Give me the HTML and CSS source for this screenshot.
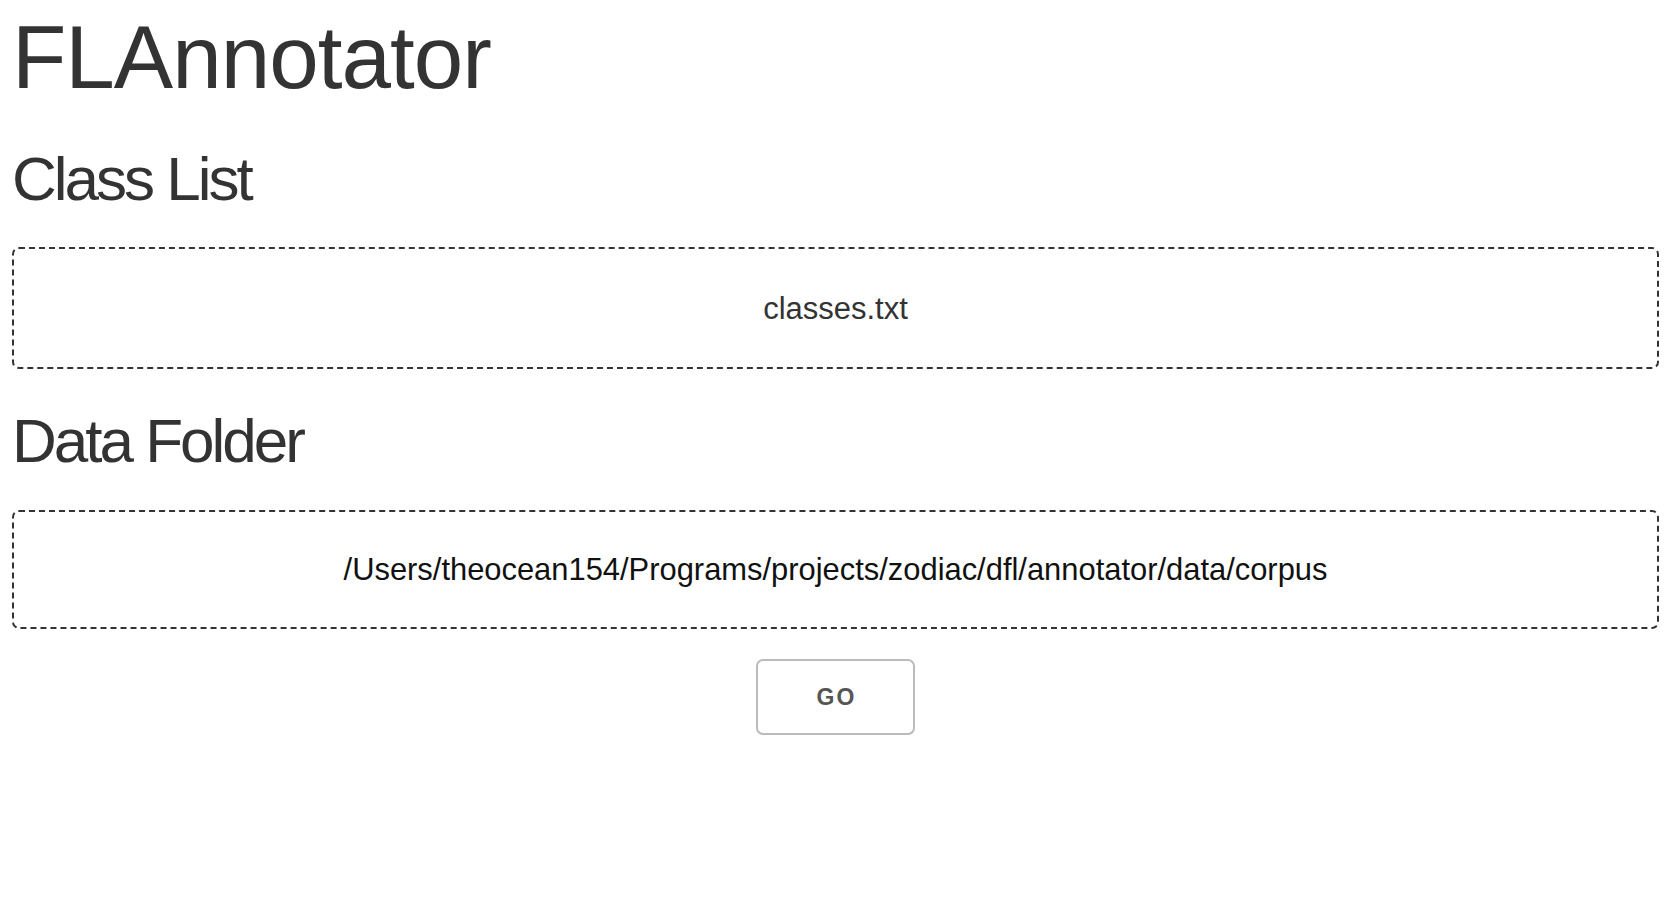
FILE: index.html
```html
<!DOCTYPE html>
<html>
<head>
<meta charset="utf-8">
<title>FLAnnotator</title>
<link rel="stylesheet" href="styles.css">
</head>
<body>
<div class="page">
  <h1 class="title">FLAnnotator</h1>
  <h3 class="section-title first">Class List</h3>
  <div class="drop-zone">
    <span class="drop-label">classes.txt</span>
  </div>
  <h3 class="section-title">Data Folder</h3>
  <div class="drop-zone compact">
    <span class="drop-label path">/Users/theocean154/Programs/projects/zodiac/dfl/annotator/data/corpus</span>
  </div>
  <div class="actions">
    <button class="btn">GO</button>
  </div>
</div>
</body>
</html>
```

FILE: styles.css
```css
html, body {
  margin: 0;
  padding: 0;
  background: #fff;
}

body {
  font-family: "Liberation Sans", Arial, sans-serif;
  color: #333;
}

.page {
  padding: 4px 15px 0 12px;
}

.title {
  margin: 0;
  font-size: 89px;
  font-weight: 400;
  line-height: 1.2;
  letter-spacing: -1px;
  color: #333;
}

.section-title {
  margin: 35px 0 0 0;
  font-size: 62px;
  font-weight: 400;
  line-height: 1.2;
  letter-spacing: -3px;
  color: #333;
}

.section-title.first {
  margin-top: 31px;
}

.drop-zone {
  margin-top: 31px;
  height: 118px;
  border: 2px dashed #333;
  border-radius: 7px;
  display: flex;
  align-items: center;
  justify-content: center;
}

.drop-zone.compact {
  height: 115px;
}

.drop-label {
  font-size: 31px;
  line-height: 1.2;
  color: #333;
}

.drop-label.path {
  color: #111;
  font-size: 30.9px;
}

.actions {
  display: flex;
  justify-content: center;
  margin-top: 30px;
  padding-right: 1px;
}

.btn {
  width: 159px;
  height: 76px;
  background: #fff;
  border: 2px solid #bbb;
  border-radius: 7px;
  font-family: "Liberation Sans", Arial, sans-serif;
  font-size: 23px;
  font-weight: 700;
  letter-spacing: 2.2px;
  color: #555;
  padding: 2px 0 0 3px;
}
```
